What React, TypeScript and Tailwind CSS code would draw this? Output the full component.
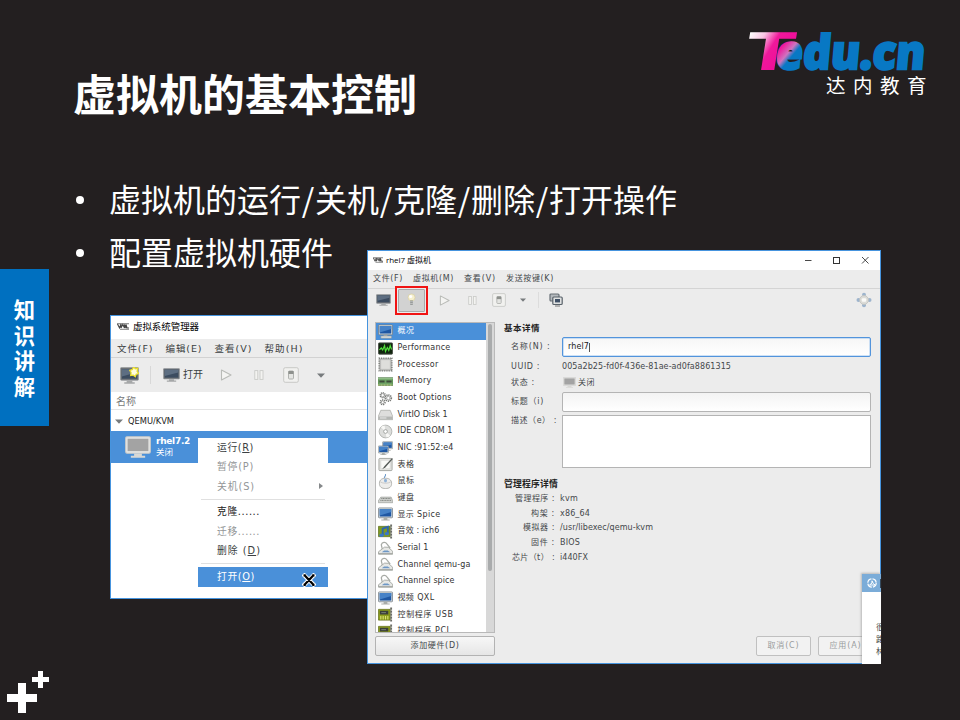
import React, { useLayoutEffect, useRef } from "react";

const UI = "font-['DejaVu_Sans','Noto_Sans_CJK_SC',sans-serif]";
const CJK = "font-['Noto_Sans_CJK_SC',sans-serif]";

/** One line of text, tracked so that it fills a given width. */
function Fit({ w, className = "", children }: { w: number; className?: string; children: React.ReactNode }) {
  const ref = useRef<HTMLSpanElement>(null);
  useLayoutEffect(() => {
    const el = ref.current;
    if (!el) return;
    el.style.letterSpacing = "0px";
    const natural = el.getBoundingClientRect().width;
    const count = Math.max(1, (el.textContent || "").length);
    el.style.letterSpacing = (w - natural) / count + "px";
  }, [w]);
  return (
    <span ref={ref} className={"inline-block w-fit shrink-0 whitespace-nowrap " + className}>
      {children}
    </span>
  );
}

function Monitor({ className, dim = false, star = false }: { className: string; dim?: boolean; star?: boolean }) {
  return (
    <svg viewBox="0 0 20 16" preserveAspectRatio="none" className={"shrink-0 " + className}>
      <rect x="0.5" y="0.5" width="19" height="12" rx="1" fill={dim ? "#e6e6e4" : "#6b7075"} stroke={dim ? "#c9c9c7" : "#9a9ea1"} strokeWidth="0.8" />
      <rect x="2" y="2" width="16" height="9" fill={dim ? "#a3a3a3" : "#3c4c60"} />
      {!dim && <path d="M2 2h16v3L2 9z" fill="#5d6e82" />}
      <path d="M7 12.8h6v1.6h2.500v1.400h-11v-1.400h2.500z" fill={dim ? "#d8d8d5" : "#a5a7a8"} />
      {star && <path d="M14.500 -0.500l1.500 2.200 2.700-.4-.7 2.700 1.600 2-2.600.9-.8 2.300-2.200-1.500-2.800.3.500-2.700-1.400-2.200 2.800-.8z" fill="#fffde0" stroke="#e9de2c" strokeWidth="1.300" />}
    </svg>
  );
}

function VmLogo({ className }: { className: string }) {
  return (
    <svg viewBox="0 0 12 7" className={"shrink-0 " + className} fill="none" stroke="#444" strokeWidth="1.100">
      <path d="M0 .8h4M4 .8h8" stroke="#777" />
      <path d="M.5 1l2 4 1.500-4v4l1.800-3.500L7.500 5V1.500L9 5V1.500l1 3.500h2" />
      <path d="M3 6.300h9" stroke="#888" />
    </svg>
  );
}

function Play({ className }: { className: string }) {
  return (
    <svg viewBox="0 0 12 12" className={"shrink-0 " + className}>
      <path d="M1.500 1L11 6 1.500 11z" fill="#f4f4f2" stroke="#b9bbb7" strokeWidth="1.100" strokeLinejoin="round" />
    </svg>
  );
}
function Pause({ className }: { className: string }) {
  return (
    <svg viewBox="0 0 10 10" className={"shrink-0 " + className} fill="#f3f3f1" stroke="#c9cac7" strokeWidth="0.900">
      <rect x="0.800" y="0.600" width="3" height="8.800" />
      <rect x="6" y="0.600" width="3" height="8.800" />
    </svg>
  );
}
function Power({ className }: { className: string }) {
  return (
    <svg viewBox="0 0 16 16" className={"shrink-0 " + className}>
      <rect x="0.700" y="0.700" width="14.600" height="14.600" rx="1.500" fill="#f1f1ef" stroke="#c8c9c6" strokeWidth="1" />
      <rect x="5.500" y="4" width="5" height="8" rx="1" fill="#e4e5e2" stroke="#a9aba8" strokeWidth="0.900" />
      <rect x="5.500" y="4" width="5" height="3" fill="#8e918d" />
    </svg>
  );
}
function Caret({ className }: { className: string }) {
  return (
    <svg viewBox="0 0 8 5" className={"shrink-0 " + className}>
      <path d="M0 .5h8L4 4.800z" fill="#777b7d" />
    </svg>
  );
}

function BlueScreen({ x = 0, y = 0, s = 1 }: { x?: number; y?: number; s?: number }) {
  return (
    <g transform={`translate(${x} ${y}) scale(${s})`}>
      <rect x="0.500" y="1" width="15" height="10.500" rx="0.800" fill="#e1e4e0" stroke="#6f7a84" strokeWidth="0.800" />
      <rect x="1.800" y="2.200" width="12.400" height="8" fill="#1f57a3" />
      <path d="M1.800 2.200h12.400v3L1.800 9z" fill="#4682c7" />
      <path d="M6 11.700h4v1.500h2.500v1.300h-9v-1.300H6z" fill="#a9aca8" />
    </g>
  );
}

function HardwareIcon({ kind }: { kind: string }) {
  let art: React.ReactNode = null;
  switch (kind) {
    case "overview":
      art = (<><BlueScreen /><rect x="3" y="12.700" width="11.500" height="2.600" rx="0.600" fill="#d4d8d6" stroke="#7f8b96" strokeWidth="0.500" /></>);
      break;
    case "display":
      art = <BlueScreen />;
      break;
    case "perf":
      art = (<><rect x="0.500" y="2" width="15" height="12" rx="0.800" fill="#10260e" stroke="#4c514a" /><path d="M1.500 9.500l2-2 1.500 2 2-4.500 1 6 2-4 1.500 3 1.500-5 1.500 4" fill="none" stroke="#52e03c" strokeWidth="1.300" /></>);
      break;
    case "cpu":
      art = (<><rect x="1.300" y="1.300" width="13.400" height="13.400" fill="none" stroke="#6f716d" strokeWidth="1.600" strokeDasharray="1 0.900" /><rect x="2" y="2" width="12" height="12" rx="1" fill="#cfd0cd" stroke="#8b8d89" strokeWidth="0.700" /><rect x="3.500" y="3.500" width="9" height="9" fill="#dededb" /></>);
      break;
    case "mem":
      art = (<><rect x="0" y="4" width="16" height="8.500" fill="#6fa465" stroke="#4d7645" strokeWidth="0.600" /><path d="M0 5h16" stroke="#9cc593" /><path d="M1.500 8h5.500M9 8h5.500" stroke="#3f4c3b" strokeWidth="2.200" /><path d="M0 11.800h16" stroke="#d8cf8a" strokeDasharray="1 .6" /></>);
      break;
    case "gears":
      art = (<g fill="none" stroke="#777976"><circle cx="5" cy="4.500" r="2.600" strokeWidth="1.600" strokeDasharray="1.200 .8" /><circle cx="11" cy="7.500" r="3.200" strokeWidth="1.800" strokeDasharray="1.300 .8" /><circle cx="5" cy="12" r="2.500" strokeWidth="1.600" strokeDasharray="1.200 .8" /><circle cx="5" cy="4.500" r="1.700" strokeWidth=".6" /><circle cx="11" cy="7.500" r="1.800" strokeWidth=".6" /><circle cx="5" cy="12" r="1.500" strokeWidth=".6" /></g>);
      break;
    case "disk":
      art = (<><path d="M3 3.500h10l2.700 6.500v3.500H.3V10z" fill="#dededc" stroke="#a0a29e" strokeWidth="0.700" /><path d="M.5 10.200h15v3H.5z" fill="#b4b6b3" /><path d="M2 11.700h7" stroke="#eee" /></>);
      break;
    case "cd":
      art = (<><circle cx="8" cy="8" r="6.800" fill="#dcdddb" stroke="#a3a5a1" strokeWidth="0.800" /><path d="M8 8L3 3.500A6.500 6.500 0 0 1 7 1.500zM8 8l5 4.500A6.500 6.500 0 0 1 9 14.500z" fill="#f8f8f6" /><circle cx="8" cy="8" r="2" fill="#fff" stroke="#999b98" strokeWidth="0.900" /></>);
      break;
    case "nic":
      art = (<><BlueScreen x={4.500} y={0} s={0.720} /><BlueScreen x={0} y={4.500} s={0.720} /></>);
      break;
    case "tablet":
      art = (<><rect x="1" y="1.500" width="14" height="13" rx="1" fill="#e6e6e3" stroke="#a2a49f" /><path d="M3 3.500h10v9H3z" fill="#fafaf8" stroke="#c8cac5" strokeWidth="0.500" /><path d="M15 1L7 9.500 4.500 13l3.500-2.200L15.800 2z" fill="#555a57" /></>);
      break;
    case "mouse":
      art = (<><path d="M7 4.500c-1-2 2-2 .8-4.500" fill="none" stroke="#6f9ccb" strokeWidth="1.100" /><path d="M1.500 10C1.500 6 4.500 4.500 8 4.500S14.500 6 14.500 10s-2.500 5.500-6.500 5.500S1.500 14 1.500 10z" fill="#ededeb" stroke="#a0a29e" strokeWidth="0.800" /><path d="M2.500 8.500c3 1.800 8 1.800 11 0" fill="none" stroke="#bbb" strokeWidth=".7" /><ellipse cx="8" cy="7" rx="1.600" ry="2" fill="#8fb2d8" /></>);
      break;
    case "keyboard":
      art = (<><path d="M3 6.500h11l1.700 4v2H.3v-2z" fill="#d0d2cf" stroke="#8d908b" strokeWidth="0.600" /><path d="M3.500 8h10M2.500 10h12" stroke="#777a76" strokeWidth=".9" strokeDasharray="1.200 .5" /></>);
      break;
    case "sound":
      art = (<><path d="M.5 2.500H13v11H.5z" fill="#7f9a22" stroke="#536710" strokeWidth=".7" /><path d="M14 .5v15" fill="none" stroke="#6c6e68" strokeWidth="2" strokeDasharray="2.500 .7" /><path d="M5 12V5l5.500-2v7" fill="none" stroke="#2d66ae" strokeWidth="2" /><ellipse cx="3.800" cy="12" rx="2.400" ry="1.800" fill="#3b78c4" /><ellipse cx="9.300" cy="10.300" rx="2.400" ry="1.800" fill="#3b78c4" /></>);
      break;
    case "serial":
      art = (<><path d="M4.500 8.500L3.500 4C4.500 1 8 .8 9.500 3l3.500 4.500" fill="none" stroke="#a7aaa5" strokeWidth="1.300" /><path d="M.5 11.500L7 6.500l4 .2 4.700 4.300v3H.5z" fill="#e6e7e4" stroke="#969994" strokeWidth=".8" /><path d="M4 12l2.500-2h4l2.500 2z" fill="#6d97c5" /><path d="M.8 13.600h14.600" stroke="#9b9d99" /></>);
      break;
    default:
      art = (<><path d="M.5 2.500H13v11.500H.5z" fill="#8e9f1c" stroke="#586710" strokeWidth=".7" /><rect x="2" y="4" width="9" height="4" fill="#3b403a" /><path d="M3.500 6h5" stroke="#7d857a" /><path d="M3 9.700v3.500M5.500 9.700v3.500M8 9.700v3.500M10.500 9.700v3.500" stroke="#dbe275" strokeWidth="1.200" /><path d="M14 .5v15" fill="none" stroke="#6c6e68" strokeWidth="2" strokeDasharray="2.500 .7" /></>);
  }
  return <svg viewBox="0 0 16 16" className="h-[15px] w-[15px] shrink-0">{art}</svg>;
}

const hardware: [string, string, number][] = [
  ["overview", "概况", 17],
  ["perf", "Performance", 53],
  ["cpu", "Processor", 41],
  ["mem", "Memory", 34],
  ["gears", "Boot Options", 54],
  ["disk", "VirtIO Disk 1", 50],
  ["cd", "IDE CDROM 1", 55],
  ["nic", "NIC :91:52:e4", 56],
  ["tablet", "表格", 17],
  ["mouse", "鼠标", 17],
  ["keyboard", "键盘", 17],
  ["display", "显示 Spice", 43],
  ["sound", "音效 : ich6", 42],
  ["serial", "Serial 1", 31],
  ["serial", "Channel qemu-ga", 73],
  ["serial", "Channel spice", 57],
  ["display", "视频 QXL", 37],
  ["card", "控制程序 USB", 56],
  ["card", "控制程序 PCI", 52],
];

function TeduLogo() {
  return (
    <svg viewBox="0 0 190 50" className="block h-[50px] w-[190px] shrink-0 overflow-visible">
      <defs>
        <linearGradient id="tFill" x1="0" y1="0" x2="0.750" y2="0.500">
          <stop offset="0.200" stopColor="#fff" />
          <stop offset="0.480" stopColor="#fbc6e5" />
          <stop offset="0.750" stopColor="#f0189b" />
          <stop offset="1" stopColor="#f0109a" />
        </linearGradient>
        <linearGradient id="eFill" gradientUnits="userSpaceOnUse" x1="32" y1="22" x2="56" y2="40">
          <stop offset="0.100" stopColor="#f0189b" />
          <stop offset="0.400" stopColor="#cf74bf" />
          <stop offset="0.580" stopColor="#0878c4" />
          <stop offset="1" stopColor="#0878c4" />
        </linearGradient>
      </defs>
      <text transform="translate(-1.500 45) skewX(-9) scale(1.640 1)" fontFamily="Open Sans" fontWeight="700" fontSize="53" fill="url(#tFill)">T</text>
      <g transform="translate(31 45) skewX(-5) translate(-31 -45)" fontFamily="Open Sans" fontWeight="800" fontSize="47" fill="#0878c4" stroke="#0878c4" strokeWidth="2.400">
        <text x="31" y="44" textLength="149" lengthAdjust="spacingAndGlyphs">
          <tspan fill="url(#eFill)" stroke="url(#eFill)">e</tspan>du.cn
        </text>
      </g>
    </svg>
  );
}

function ManagerWindow() {
  return (
    <div className={"absolute left-[110px] top-[315px] flex h-[284px] w-[259px] flex-col border border-[#4694de] bg-white text-[9.5px] leading-none text-[#3b3f42] " + UI}>
      <div className="flex h-[23px] shrink-0 items-center gap-[4px] pb-[2px] pl-[6px] text-black">
        <VmLogo className="h-[7px] w-[12px]" />
        <Fit w={66} className={CJK}>虚拟系统管理器</Fit>
      </div>
      <div className="flex h-[19px] shrink-0 items-center gap-[12px] border-b border-[#d2d2d2] bg-[#ececec] pl-[6px] pt-[2px]">
        <Fit w={36.5}>文件(F)</Fit>
        <Fit w={37}>编辑(E)</Fit>
        <Fit w={38}>查看(V)</Fit>
        <Fit w={39}>帮助(H)</Fit>
      </div>
      <div className="flex h-[34px] shrink-0 items-center bg-[#ececec] pl-[9px]">
        <Monitor star className="h-[17px] w-[19px]" />
        <div className="ml-[11px] h-[18px] w-px bg-[#d8d8d8]" />
        <Monitor className="ml-[12px] h-[14px] w-[17px]" />
        <Fit w={20} className="ml-[3px] text-[10px]">打开</Fit>
        <Play className="ml-[17px] h-[12px] w-[12px]" />
        <Pause className="ml-[22px] h-[10px] w-[10px]" />
        <Power className="ml-[19px] h-[16px] w-[16px]" />
        <Caret className="ml-[18px] h-[5px] w-[8px]" />
      </div>
      <div className="flex h-[18px] shrink-0 items-center border-b border-[#e4e4e4] pl-[5px] pt-[2px] text-[#77797a]">
        <Fit w={20} className="text-[10px]">名称</Fit>
      </div>
      <div className="flex h-[21px] shrink-0 items-center pl-[4px] pt-[1px] text-[8.3px] text-[#222]">
        <Caret className="h-[5px] w-[8px]" />
        <Fit w={46} className="ml-[5px]">QEMU/KVM</Fit>
      </div>
      <div className="flex h-[32px] shrink-0 items-center bg-[#4a90d9] pl-[14px] text-white">
        <Monitor dim className="h-[22px] w-[26px]" />
        <div className="ml-[5px] flex flex-col gap-[2px]">
          <Fit w={34} className="text-[9px] font-bold">rhel7.2</Fit>
          <Fit w={17} className="text-[8.5px]">关闭</Fit>
        </div>
      </div>
      <ContextMenu />
    </div>
  );
}

function ContextMenu() {
  const row = "flex h-[19.4px] shrink-0 items-center pl-[19px]";
  return (
    <div className="absolute left-[87px] top-[122px] flex h-[150px] w-[130px] flex-col bg-white text-[9.8px]">
      <div className={row}><Fit w={37}>运行(<u>R</u>)</Fit></div>
      <div className={row + " text-[#939697]"}><Fit w={37}>暂停(P)</Fit></div>
      <div className={row + " text-[#939697]"}>
        <Fit w={38}>关机(S)</Fit>
        <svg viewBox="0 0 4 6" className="ml-[64px] h-[6px] w-[4px]"><path d="M0 0l4 3-4 3z" fill="#85888a" /></svg>
      </div>
      <div className="mx-[3px] mb-[3px] mt-[2.500px] h-px shrink-0 bg-[#e0e0e0]" />
      <div className={row + " text-[#222]"}><Fit w={43}>克隆......</Fit></div>
      <div className={row + " text-[#939697]"}><Fit w={43}>迁移......</Fit></div>
      <div className={row}><Fit w={44}>删除 (<u>D</u>)</Fit></div>
      <div className="mx-[3px] mb-[3px] mt-[2.500px] h-px shrink-0 bg-[#e0e0e0]" />
      <div className="flex h-[19.500px] shrink-0 items-center bg-[#4a90d9] pl-[19px] text-white">
        <Fit w={38}>打开(<u>O</u>)</Fit>
        <svg viewBox="0 0 14 14" className="ml-[47px] mt-[5px] h-[14px] w-[14px] shrink-0">
          <path d="M2.500 2.500l9 9M11.500 2.500l-9 9" fill="none" stroke="#fff" strokeWidth="4.200" strokeLinecap="square" />
          <path d="M1.500 2.300h2.300M10.200 2.300h2.300M1.500 11.800h2.300M10.200 11.800h2.300M2.800 2.500l8.400 9M11.200 2.500l-8.400 9" fill="none" stroke="#000" strokeWidth="2.200" />
        </svg>
      </div>
    </div>
  );
}

function InfoRow({ label, w, value, vw }: { label: string; w: number; value: string; vw: number }) {
  return (
    <div className="flex h-[14.700px] shrink-0 items-center">
      <div className="flex w-[56px] justify-end pr-[5px]"><Fit w={w}>{label}</Fit></div>
      <Fit w={vw}>{value}</Fit>
    </div>
  );
}

function DetailsWindow() {
  const button = "flex items-center justify-center rounded-[2px] border";
  return (
    <div className={"absolute left-[367px] top-[250px] flex h-[414px] w-[514px] flex-col border border-[#4694de] bg-[#ececec] text-[8px] leading-none text-[#44484b] " + UI}>
      <div className="flex h-[19px] shrink-0 items-center bg-white pb-[2px] pl-[5px] text-black">
        <VmLogo className="h-[6px] w-[10px]" />
        <Fit w={45} className="ml-[3px] font-['Open_Sans','Noto_Sans_CJK_SC',sans-serif] text-[8px]">rhel7 虚拟机</Fit>
        <svg viewBox="0 0 66 8" className="ml-auto mr-[11px] h-[8px] w-[66px]" fill="none" stroke="#333">
          <path d="M2 4.500h6.500M59 1l6.500 6.500M65.500 1L59 7.500" strokeWidth="0.900" />
          <rect x="30.500" y="1.500" width="6" height="6" />
        </svg>
      </div>
      <div className="flex h-[19px] shrink-0 items-center gap-[10px] border-b border-[#d4d4d4] pl-[5px]">
        <Fit w={30}>文件(F)</Fit>
        <Fit w={41}>虚拟机(M)</Fit>
        <Fit w={32}>查看(V)</Fit>
        <Fit w={48}>发送按键(K)</Fit>
      </div>
      <div className="flex h-[22px] shrink-0 items-center pl-[8px]">
        <Monitor className="h-[12px] w-[15px]" />
        <div className="ml-[4px] h-[29px] w-[33px] border-2 border-[#f01414] bg-[#ececec] p-px">
          <div className="flex h-full items-center justify-center rounded-[1px] border border-[#aaa] bg-[#d2d2d2]">
            <svg viewBox="0 0 10 16" className="h-[14px] w-[9px]">
              <circle cx="5" cy="5" r="4" fill="#f5efcd" stroke="#d9cfa4" strokeWidth=".8" />
              <circle cx="4" cy="4" r="1.800" fill="#fff" />
              <path d="M3.500 8.500h3v5h-3z" fill="#8c8f8e" />
              <path d="M3.500 10h3M3.500 12h3" stroke="#ddd" strokeWidth=".7" />
            </svg>
          </div>
        </div>
        <Play className="ml-[11px] h-[11px] w-[11px]" />
        <Pause className="ml-[18px] h-[9px] w-[9px]" />
        <Power className="ml-[15px] h-[14px] w-[14px]" />
        <Caret className="ml-[14px] h-[4px] w-[6px]" />
        <div className="ml-[12px] h-[16px] w-px bg-[#dcdcdc]" />
        <svg viewBox="0 0 14 14" className="ml-[10px] h-[14px] w-[14px] shrink-0">
          <rect x="1" y="1" width="9" height="7" rx="1" fill="#b4b9bd" stroke="#666e75" strokeWidth="1.200" />
          <rect x="3.800" y="4" width="9.400" height="7.500" rx="1" fill="#dfe1e1" stroke="#59626a" strokeWidth="1.200" />
          <rect x="6" y="6" width="5" height="3.400" fill="#3f5066" />
          <path d="M6 13h5" stroke="#777" />
        </svg>
        <svg viewBox="0 0 16 16" className="ml-auto mr-[8px] h-[16px] w-[16px]">
          <g fill="#9db4cd"><circle cx="8" cy="2.800" r="2" /><circle cx="8" cy="13.200" r="2" /><circle cx="2.500" cy="8" r="2" /><circle cx="13.500" cy="8" r="2" /></g>
          <circle cx="8" cy="8" r="4.400" fill="#dcdcd8" stroke="#c0c1bd" strokeWidth=".8" />
          <rect x="5.800" y="6.300" width="4.400" height="3.400" rx="1" fill="#fafaf8" />
        </svg>
      </div>
      <div className="flex min-h-0 flex-1 pt-[4px]">
        <div className="flex w-[136px] shrink-0 flex-col pl-[7px] pt-[7px]">
          <div className="flex h-[311px] w-[120px] overflow-hidden border border-[#b9b9b9] bg-[#d8d8d8]">
            <div className="flex w-[110px] flex-col bg-white text-[#333]">
              {hardware.map(([kind, label, w], i) => (
                <div key={i} className={"flex h-[16.680px] shrink-0 items-center gap-[5px] pl-[1.500px] " + (i === 0 ? "bg-[#4a90d9] text-white" : "")}>
                  <HardwareIcon kind={kind} />
                  <Fit w={w}>{label}</Fit>
                </div>
              ))}
            </div>
            <div className="ml-[2px] mt-px h-[247px] w-[4px] rounded-full bg-[#a9abac]" />
          </div>
          <div className={button + " mt-[3px] h-[20px] w-[120px] border-[#b3b3b3] bg-linear-to-b from-[#f7f7f7] to-[#e6e6e6]"}>
            <Fit w={49}>添加硬件(D)</Fit>
          </div>
        </div>
        <div className="flex flex-1 flex-col pt-[5px]">
          <div className="flex h-[17px] items-center font-bold text-[#222]"><Fit w={36} className="text-[8.5px]">基本详情</Fit></div>
          <div className="flex h-[20px] items-center">
            <div className="w-[58px] pl-[7px]"><Fit w={39.5}>名称(N) :</Fit></div>
            <div className="flex h-[20px] w-[309px] items-center rounded-[2px] border border-[#5294dc] bg-linear-to-b from-[#f6f6f6] to-white pl-[5px] text-[#222] shadow-[inset_0_0_0_0.500px_#9cc4ee]">
              <Fit w={21}>rhel7</Fit>
              <div className="h-[9px] w-px bg-[#555]" />
            </div>
          </div>
          <div className="flex h-[18px] items-center pt-px">
            <div className="w-[58px] pl-[7px]"><Fit w={29}>UUID :</Fit></div>
            <Fit w={169}>005a2b25-fd0f-436e-81ae-ad0fa8861315</Fit>
          </div>
          <div className="flex h-[15px] items-center">
            <div className="w-[59px] pl-[7px]"><Fit w={24}>状态 :</Fit></div>
            <Monitor dim className="h-[11px] w-[13px]" />
            <Fit w={17} className="ml-[2px]">关闭</Fit>
          </div>
          <div className="mt-[2px] flex h-[20px] items-center">
            <div className="w-[58px] pl-[7px]"><Fit w={33}>标题（i)</Fit></div>
            <div className="h-[20px] w-[309px] rounded-[2px] border border-[#b4b4b4] bg-linear-to-b from-[#f3f3f3] to-white" />
          </div>
          <div className="mt-[3px] flex h-[53px]">
            <div className="w-[58px] pl-[7px] pt-[2px]"><Fit w={46}>描述（e） :</Fit></div>
            <div className="h-[53px] w-[309px] border border-[#b4b4b4] bg-white" />
          </div>
          <div className="mt-[9px] flex h-[14.500px] items-center font-bold text-[#222]"><Fit w={54} className="text-[8.800px]">管理程序详情</Fit></div>
          <InfoRow label="管理程序 :" w={40} value="kvm" vw={18} />
          <InfoRow label="构架 :" w={24} value="x86_64" vw={30} />
          <InfoRow label="模拟器 :" w={32} value="/usr/libexec/qemu-kvm" vw={93} />
          <InfoRow label="固件 :" w={24} value="BIOS" vw={20} />
          <InfoRow label="芯片（t） :" w={43} value="i440FX" vw={28} />
          <div className="mt-[71px] flex gap-[7px] pl-[252px] text-[#999c9d]">
            <div className={button + " h-[20px] w-[55px] border-[#c0c0c0] bg-[#f2f2f2]"}><Fit w={32}>取消(C)</Fit></div>
            <div className={button + " h-[20px] w-[55px] border-[#c0c0c0] bg-[#f2f2f2]"}><Fit w={32}>应用(A)</Fit></div>
          </div>
        </div>
      </div>
      <div className="absolute bottom-[-1px] right-[-1px] flex h-[90px] w-[19px] flex-col overflow-hidden bg-white shadow-[-1px_-1px_2px_#8888]">
        <div className="flex h-[18px] shrink-0 items-center bg-[#7bacd8] pl-[5px]">
          <svg viewBox="0 0 10 10" className="h-[10px] w-[10px] shrink-0" fill="none" stroke="#fff" strokeWidth="1.200">
            <circle cx="5" cy="5" r="4.200" strokeDasharray="5.500 1.100" />
            <path d="M5 2.800l1.300 2.700L8 7H2.500L5 5z" strokeWidth="1" />
          </svg>
          <div className="ml-[3px] h-[9px] w-[2px] shrink-0 bg-[#33485c]" />
        </div>
        <div className="ml-[14px] mt-[30px] flex w-[8px] shrink-0 flex-col text-[8px] leading-[12px] text-[#444]">
          <span>很</span><span>路</span><span>林</span>
        </div>
      </div>
    </div>
  );
}

export default function App() {
  return (
    <div className={"relative h-[720px] w-[960px] overflow-hidden bg-[#231f20] text-white " + CJK}>
      <header className="flex h-[160px] justify-between pl-[73px]">
        <h1 className="pt-[60px] text-[43px] font-bold leading-[64px]">虚拟机的基本控制</h1>
        <div className="flex w-[216px] flex-col pt-[25px]">
          <TeduLogo />
          <Fit w={108} className="ml-[82px] text-[19.500px] leading-[20px]">达内教育</Fit>
        </div>
      </header>
      <ul className="flex flex-col gap-[5px] pl-[76px] pt-[14px] text-[32px] leading-[48px]">
        {["虚拟机的运行/关机/克隆/删除/打开操作", "配置虚拟机硬件"].map((line) => (
          <li key={line} className="flex items-center">
            <span className="mr-[25px] mt-[3px] h-[8px] w-[8px] rounded-full bg-white" />
            {line.split("/").map((part, i) => (
              <React.Fragment key={part}>
                {i > 0 && <span className="w-[14px] text-center">/</span>}
                <span>{part}</span>
              </React.Fragment>
            ))}
          </li>
        ))}
      </ul>
      <aside className="absolute left-0 top-[269px] flex h-[157px] w-[49px] flex-col items-center bg-[#0070c0] pt-[27px] text-[21.300px] font-bold leading-[25.500px]">
        {["知", "识", "讲", "解"].map((c) => <span key={c}>{c}</span>)}
      </aside>
      <ManagerWindow />
      <DetailsWindow />
      <svg viewBox="0 0 60 60" className="absolute left-0 top-[660px] h-[60px] w-[60px]" fill="#fff">
        <path d="M18 23h8v11h11v8H26v11h-8V42H7v-8h11z" />
        <path d="M38 11h5v6h6v5h-6v6h-5v-6h-6v-5h6z" />
      </svg>
    </div>
  );
}
